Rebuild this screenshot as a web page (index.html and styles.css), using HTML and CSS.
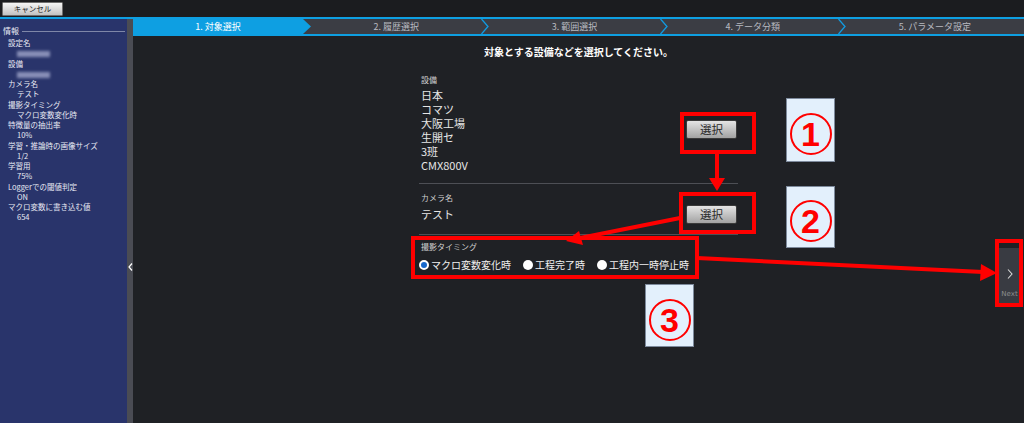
FILE: index.html
```html
<!DOCTYPE html>
<html lang="ja">
<head>
    <meta charset="UTF-8">
    <meta name="viewport" content="width=device-width, initial-scale=1.0">
    <title>対象選択</title>
    <link rel="stylesheet" href="styles.css">
</head>
<body>
    <div class="topbar">
        <button class="cancel-btn">キャンセル</button>
    </div>

    <div class="layout">
        <div class="sidebar">
            <div class="side-title">情報</div>
            <div class="side-label">設定名</div>
            <div class="side-value"><span class="blurred"></span></div>
            <div class="side-label">設備</div>
            <div class="side-value"><span class="blurred"></span></div>
            <div class="side-label">カメラ名</div>
            <div class="side-value">テスト</div>
            <div class="side-label">撮影タイミング</div>
            <div class="side-value">マクロ変数変化時</div>
            <div class="side-label">特徴量の抽出率</div>
            <div class="side-value">10%</div>
            <div class="side-label">学習・推論時の画像サイズ</div>
            <div class="side-value">1/2</div>
            <div class="side-label">学習用</div>
            <div class="side-value">75%</div>
            <div class="side-label">Loggerでの閾値判定</div>
            <div class="side-value">ON</div>
            <div class="side-label">マクロ変数に書き込む値</div>
            <div class="side-value">654</div>
        </div>

        <div class="handle">
            <svg width="5" height="8" viewBox="0 0 5 8"><polyline points="4,0.5 1,4 4,7.5" fill="none" stroke="#fff" stroke-width="1.2"/></svg>
        </div>

        <div class="main">
            <div class="steps">
                <div class="step active">
                    <span class="step-label">1. 対象選択</span>
                    <svg class="step-sep" viewBox="0 0 8 15"><polygon points="0,0 8,7.5 0,15" fill="#0e9fe2"/></svg>
                </div>
                <div class="step">
                    <span class="step-label">2. 履歴選択</span>
                    <svg class="step-sep" viewBox="0 0 8 15"><polyline points="0.5,0 7,7.5 0.5,15" fill="none" stroke="#129be0" stroke-width="1.3"/></svg>
                </div>
                <div class="step">
                    <span class="step-label">3. 範囲選択</span>
                    <svg class="step-sep" viewBox="0 0 8 15"><polyline points="0.5,0 7,7.5 0.5,15" fill="none" stroke="#129be0" stroke-width="1.3"/></svg>
                </div>
                <div class="step">
                    <span class="step-label">4. データ分類</span>
                    <svg class="step-sep" viewBox="0 0 8 15"><polyline points="0.5,0 7,7.5 0.5,15" fill="none" stroke="#129be0" stroke-width="1.3"/></svg>
                </div>
                <div class="step">
                    <span class="step-label">5. パラメータ設定</span>
                </div>
            </div>

            <h1 class="heading">対象とする設備などを選択してください。</h1>

            <div class="form">
                <div class="section">
                    <div class="info">
                        <div class="field-label">設備</div>
                        <div class="field-values">
                            <div>日本</div>
                            <div>コマツ</div>
                            <div>大阪工場</div>
                            <div>生開セ</div>
                            <div>3班</div>
                            <div>CMX800V</div>
                        </div>
                    </div>
                    <button class="select-btn">選択</button>
                </div>

                <div class="section section-camera">
                    <div class="info">
                        <div class="field-label">カメラ名</div>
                        <div class="field-values">
                            <div>テスト</div>
                        </div>
                    </div>
                    <button class="select-btn">選択</button>
                </div>

                <div class="section section-timing">
                    <div class="field-label">撮影タイミング</div>
                    <div class="radios">
                        <label class="radio"><span class="radio-dot checked"></span>マクロ変数変化時</label>
                        <label class="radio"><span class="radio-dot"></span>工程完了時</label>
                        <label class="radio"><span class="radio-dot"></span>工程内一時停止時</label>
                    </div>
                </div>
            </div>

            <div class="next-btn">
                <svg width="6" height="10" viewBox="0 0 6 10"><polyline points="1,0.5 5,5 1,9.5" fill="none" stroke="#d8d8d8" stroke-width="1.1"/></svg>
                <span class="next-text">Next</span>
            </div>
        </div>
    </div>

    <!-- annotations drawn over the screen -->
    <div class="notes">
        <svg class="marks" width="1024" height="423" viewBox="0 0 1024 423">
            <g fill="none" stroke="#f00" stroke-width="4">
                <rect x="682" y="114" width="72" height="38"/>
                <rect x="681" y="194" width="73" height="38"/>
                <rect x="413" y="238" width="284" height="39"/>
                <rect x="997" y="241" width="24" height="64"/>
            </g>
            <g stroke="#f00" stroke-width="4">
                <line x1="717" y1="152" x2="717" y2="180"/>
                <line x1="680" y1="218" x2="580" y2="238"/>
                <line x1="697" y1="258" x2="983" y2="272"/>
            </g>
            <g fill="#f00">
                <polygon points="709,178 725,178 717,191"/>
                <polygon points="566,241 583,245 579,231"/>
                <polygon points="997,273 980,281 981,264"/>
            </g>
        </svg>
        <div class="badge badge-1"><span class="badge-circle">1</span></div>
        <div class="badge badge-2"><span class="badge-circle">2</span></div>
        <div class="badge badge-3"><span class="badge-circle">3</span></div>
    </div>
</body>
</html>
```

FILE: styles.css
```css
* {
    box-sizing: border-box;
}
body {
    margin: 0;
    width: 1024px;
    height: 423px;
    overflow: hidden;
    position: relative;
    background: #1f2125;
    color: #e4e4e4;
    font-family: "Noto Sans CJK JP", "Noto Sans", sans-serif;
}
.topbar {
    height: 19px;
    padding: 2px 0 0 2px;
    background: #1b1c1f;
    border-bottom: 2px solid #0e9fe2;
}
.cancel-btn {
    display: block;
    width: 61px;
    height: 14px;
    padding: 0;
    border: 1px solid #6f6f6f;
    border-radius: 1px;
    background: linear-gradient(#f5f5f5, #c2c2c2);
    color: #222;
    font-family: "Noto Sans CJK JP", sans-serif;
    font-size: 7.5px;
    line-height: 12px;
}
.layout {
    display: flex;
    height: 404px;
}
.sidebar {
    width: 127px;
    flex: none;
    padding: 7px 2px 0 3px;
    background: #29346b;
    color: #e8eaf4;
    font-size: 7.5px;
}
.side-title {
    display: flex;
    align-items: center;
    gap: 3px;
    height: 10px;
    line-height: 10px;
    font-size: 8px;
    margin-bottom: 2px;
}
.side-title::after {
    content: "";
    flex: 1;
    height: 1px;
    background: #7f87a8;
}
.side-label {
    padding-left: 5px;
    height: 10.25px;
    line-height: 10.25px;
    white-space: nowrap;
}
.side-value {
    padding-left: 14px;
    height: 10.25px;
    line-height: 10.25px;
}
.blurred {
    display: inline-block;
    width: 33px;
    height: 6px;
    vertical-align: middle;
    background: rgba(200, 205, 235, 0.6);
    filter: blur(1.5px);
}
.handle {
    width: 6px;
    flex: none;
    padding-top: 244px;
    display: flex;
    justify-content: center;
    align-items: flex-start;
    background: #4a4c54;
}
.main {
    flex: 1;
    position: relative;
}
.steps {
    display: flex;
    height: 17px;
    background: #3b3d44;
    border-bottom: 2px solid #0e9fe2;
}
.step {
    flex: 1;
    display: flex;
}
.step-label {
    flex: 1;
    text-align: center;
    font-size: 9px;
    line-height: 15px;
    color: #b8bac0;
}
.step.active .step-label {
    background: #0e9fe2;
    color: #fff;
}
.step-sep {
    width: 8px;
    height: 15px;
    flex: none;
}
.heading {
    margin: 8px 0 0;
    text-align: center;
    font-size: 10px;
    line-height: 15px;
    font-weight: bold;
    color: #fff;
}
.form {
    width: 319px;
    margin: 16px auto 0;
}
.section {
    display: flex;
    padding: 0 1px 10px 2px;
    border-bottom: 1px solid #4d4f55;
}
.section + .section {
    padding-top: 9px;
}
.info {
    flex: 1;
}
.field-label {
    font-size: 8px;
    line-height: 10px;
    color: #d0d0d0;
}
.field-values {
    margin-top: 3px;
    font-size: 11px;
    line-height: 14.1px;
    color: #e6e6e6;
}
.section-camera .field-values {
    margin-top: 4px;
}
.select-btn {
    align-self: center;
    margin-top: 12px;
    width: 51px;
    height: 19px;
    padding: 0;
    border: 1px solid #3a3a3a;
    border-radius: 2px;
    background: linear-gradient(#e4e4e4, #a2a2a2);
    color: #2a2a2a;
    font-family: "Noto Sans CJK JP", sans-serif;
    font-size: 11.5px;
    line-height: 17px;
}
.section.section-timing {
    display: block;
    padding-top: 7px;
    border-bottom: none;
}
.radios {
    display: flex;
    align-items: center;
    gap: 12px;
    height: 14px;
    margin: 6px 0 0 -2px;
    font-size: 10px;
    color: #f0f0f0;
}
.radio {
    display: flex;
    align-items: center;
    gap: 2px;
}
.radio-dot {
    width: 10px;
    height: 10px;
    border-radius: 50%;
    background: #fff;
}
.radio-dot.checked {
    background: #1668cc;
    border: 2px solid #fff;
}
.next-btn {
    position: absolute;
    right: 4px;
    top: 229px;
    width: 21px;
    height: 55px;
    padding-top: 21px;
    display: flex;
    flex-direction: column;
    align-items: center;
    background: #393b42;
}
.next-text {
    margin-top: 11px;
    font-family: "DejaVu Sans", sans-serif;
    font-size: 7px;
    line-height: 9px;
    color: #8c8c8c;
}
.notes {
    position: absolute;
    top: 0;
    left: 0;
    width: 1024px;
    height: 423px;
    pointer-events: none;
}
.marks {
    position: absolute;
    top: 0;
    left: 0;
}
.badge {
    position: absolute;
    width: 49px;
    height: 64px;
    padding-top: 8px;
    display: flex;
    justify-content: center;
    align-items: center;
    background: #e3f0fc;
    border: 1px solid #7d8a9c;
}
.badge-1 {
    left: 786px;
    top: 98px;
}
.badge-2 {
    left: 786px;
    top: 186px;
    height: 62px;
}
.badge-3 {
    left: 645px;
    top: 284px;
    height: 63px;
}
.badge-circle {
    width: 42px;
    height: 42px;
    display: flex;
    justify-content: center;
    align-items: center;
    border: 2px solid #f00;
    border-radius: 50%;
    color: #f00;
    font-family: "Liberation Sans", Arial, sans-serif;
    font-weight: bold;
    font-size: 34px;
    line-height: 1;
}
```
